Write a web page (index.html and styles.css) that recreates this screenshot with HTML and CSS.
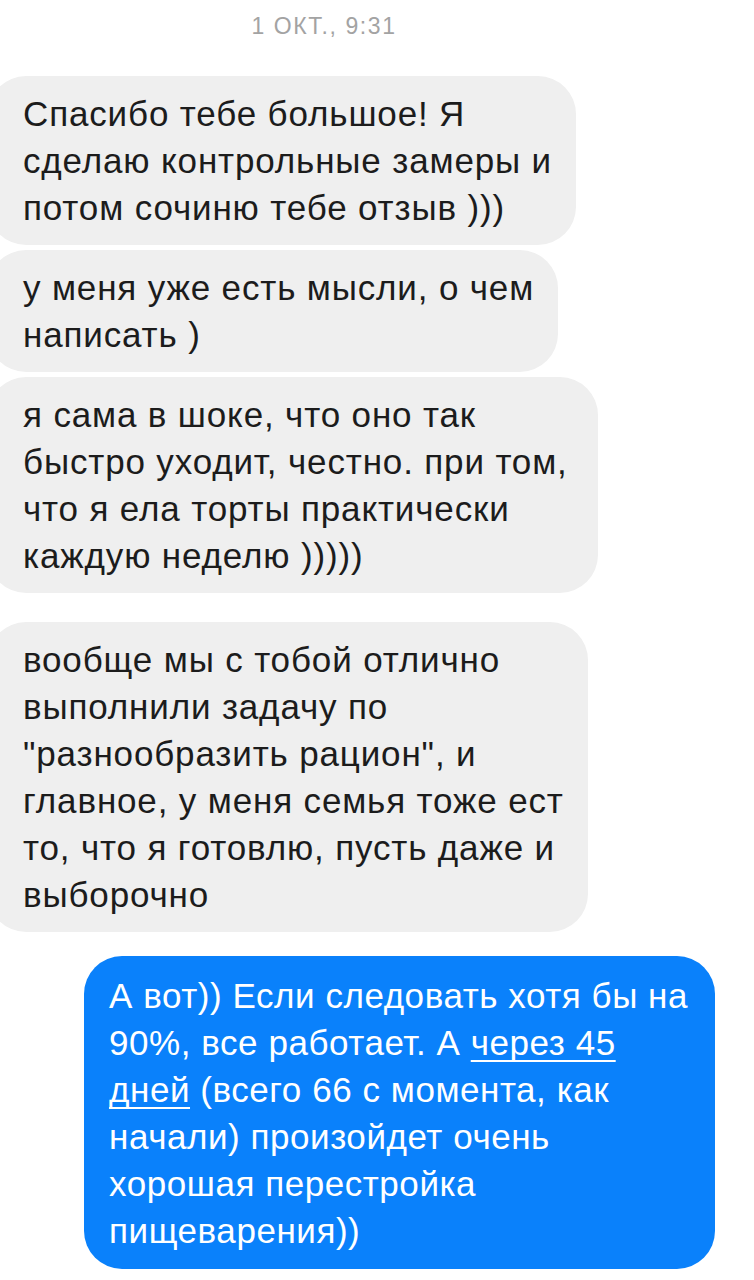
FILE: index.html
```html
<!DOCTYPE html>
<html>
<head>
  <meta charset="UTF-8">
  <meta name="viewport" content="width=device-width, initial-scale=1.0">
  <title>Чат</title>
  <link rel="stylesheet" href="styles.css">
</head>
<body>
  <div class="chat">
    <div class="stamp">1 ОКТ., 9:31</div>

    <div class="group">
      <div class="msg in">Спасибо тебе большое! Я<br>сделаю контрольные замеры и<br>потом сочиню тебе отзыв )))</div>
      <div class="msg in">у меня уже есть мысли, о чем<br>написать )</div>
      <div class="msg in">я сама в шоке, что оно так<br>быстро уходит, честно. при том,<br>что я ела торты практически<br>каждую неделю )))))</div>
    </div>

    <div class="group">
      <div class="msg in">вообще мы с тобой отлично<br>выполнили задачу по<br>"разнообразить рацион", и<br>главное, у меня семья тоже ест<br>то, что я готовлю, пусть даже и<br>выборочно</div>
    </div>

    <div class="group out-group">
      <div class="msg out">А вот)) Если следовать хотя бы на<br>90%, все работает. А <u>через 45<br>дней</u> (всего 66 с момента, как<br>начали) произойдет очень<br>хорошая перестройка<br>пищеварения))</div>
    </div>
  </div>
</body>
</html>
```

FILE: styles.css
```css
body{
  margin: 0;
  background: #fff;
  font-family: "Liberation Sans", Arial, sans-serif;
}
.chat{
  width: 754px;
  height: 1280px;
  overflow: hidden;
  display: flex;
  flex-direction: column;
}
.stamp{
  width: 648px;
  text-align: center;
  color: #a3a3a3;
  font-size: 23px;
  letter-spacing: 1.6px;
  line-height: 24px;
  padding-top: 14px;
  margin-bottom: 38px;
}
.group{
  display: flex;
  flex-direction: column;
  align-items: flex-start;
  gap: 5px;
  margin-bottom: 29px;
}
.out-group{
  align-items: flex-end;
  margin-bottom: 0;
  margin-top: -5px;
}
.msg{
  font-size: 35px;
  letter-spacing: 0.85px;
  line-height: 47px;
  border-radius: 38px;
  white-space: nowrap;
}
.in{
  background: #efefef;
  color: #1c1c1c;
  margin-left: -12px;
  padding: 14px 24px 14px 35px;
}
.in:nth-child(3){
  padding-right: 30px;
}
.out{
  background: #0a81fb;
  color: #fff;
  letter-spacing: 0.55px;
  margin-right: 39px;
  padding: 16px 27px 15px 25px;
}
.out u{
  text-decoration-thickness: 2px;
  text-underline-offset: 5px;
  text-decoration-skip-ink: none;
}
```
